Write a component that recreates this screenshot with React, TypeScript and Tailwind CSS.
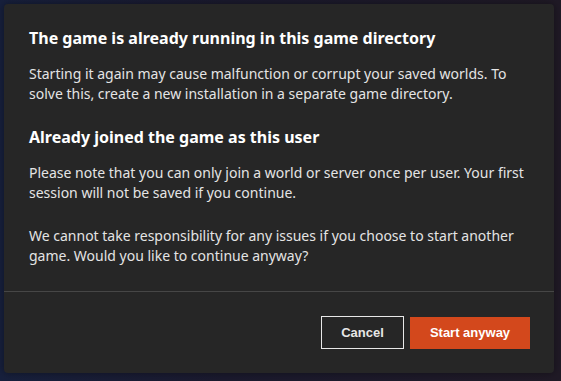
export default function App() {
  return (
    <div className="flex h-[381px] w-[561px] items-start bg-[#141a30] bg-[linear-gradient(90deg,#17203d_0%,#1b1a2e_40%,#201a26_100%)] p-1 font-['Noto_Sans',sans-serif]">
      <div className="flex h-[369px] w-[550px] flex-col rounded-[4px] bg-[#262626] shadow-[0_0_8px_rgba(0,0,0,0.4)]">
        <div className="px-[25px] pt-[22px]">
          <h2 className="mb-[14px] text-[16px] font-bold leading-6 text-white">
            The game is already running in this game directory
          </h2>
          <p className="text-[14px] leading-5 text-[#e4e4e4]">
            Starting it again may cause malfunction or corrupt your saved
            worlds. To solve this, create a new installation in a separate game
            directory.
          </p>
          <h2 className="mt-[21px] mb-[14px] text-[16px] font-bold leading-6 text-white">
            Already joined the game as this user
          </h2>
          <p className="mb-[23px] text-[14px] leading-5 text-[#e4e4e4]">
            Please note that you can only join a world or server once per user.
            Your first session will not be saved if you continue.
          </p>
          <p className="text-[14px] leading-5 text-[#e4e4e4]">
            We cannot take responsibility for any issues if you choose to start
            another game. Would you like to continue anyway?
          </p>
        </div>
        <div className="mt-auto border-t border-[#464646]" />
        <div className="flex items-center justify-end gap-[6px] px-6 pt-6 pb-6 font-['Liberation_Sans',sans-serif] text-[13px] font-bold">
          <button className="h-[33px] w-[83px] border border-[#e8e8e8] text-[#e6e6e6]">
            Cancel
          </button>
          <button className="h-[32px] w-[120px] bg-[#d3481c] text-white">
            Start anyway
          </button>
        </div>
      </div>
    </div>
  );
}
